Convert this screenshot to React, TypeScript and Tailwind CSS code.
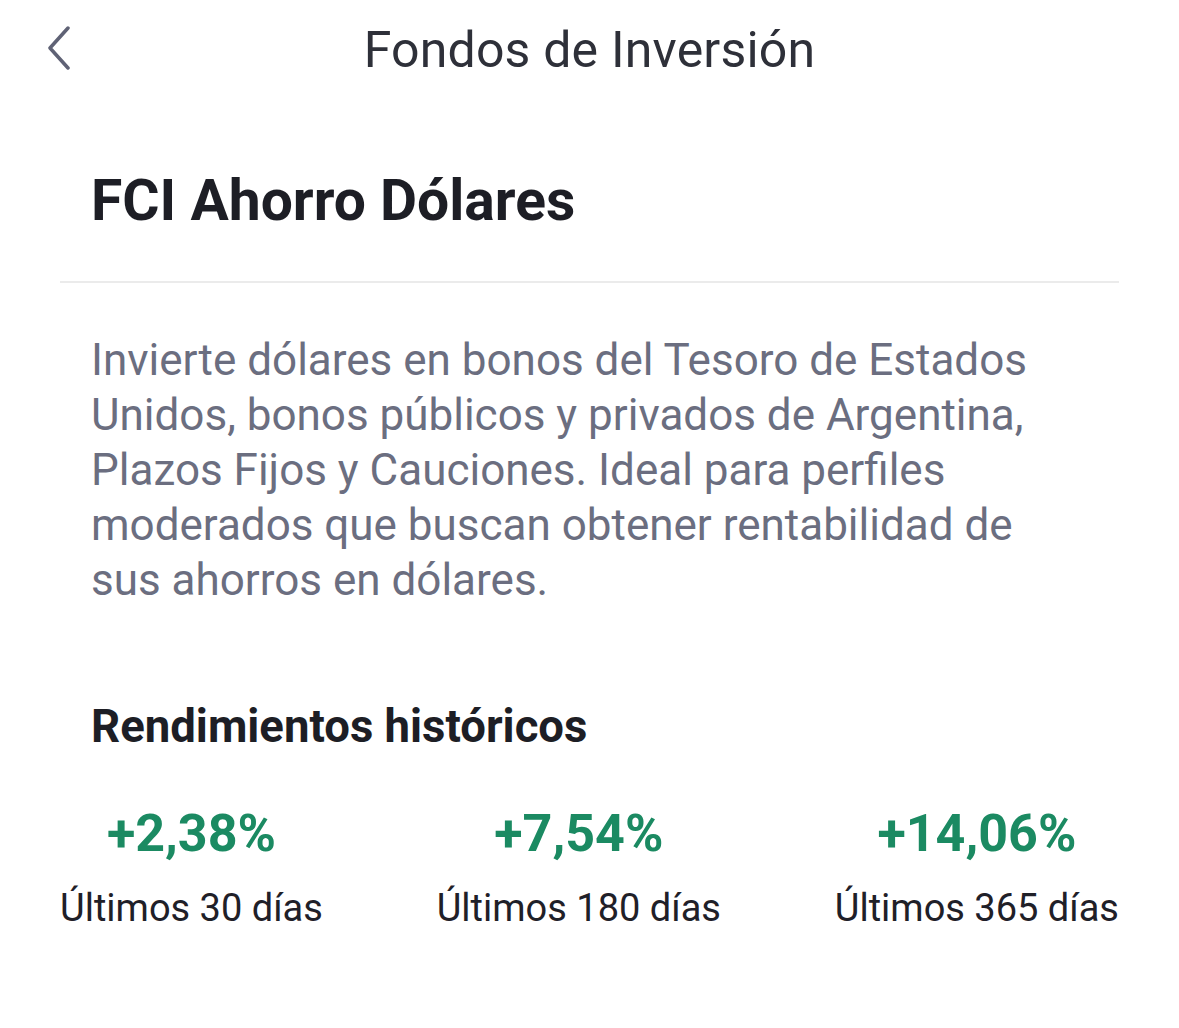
const returns = [
  { value: "+2,38%", label: "Últimos 30 días" },
  { value: "+7,54%", label: "Últimos 180 días" },
  { value: "+14,06%", label: "Últimos 365 días" },
];

export default function App() {
  return (
    <div
      className="w-[1179px] h-[1028px] bg-white text-[#1f2028]"
      style={{ fontFamily: "Roboto, 'Noto Sans', sans-serif" }}
    >
      {/* Header */}
      <div className="relative flex items-center justify-center h-[100px]">
        <button className="absolute left-[37px] top-[18px] p-1" aria-label="Volver">
          <svg width="32" height="48" viewBox="0 0 32 48" fill="none">
            <path d="M27 6 L9 26 L27 46" stroke="#5f6275" strokeWidth="3.5" strokeLinecap="round" strokeLinejoin="round" />
          </svg>
        </button>
        <h1 className="text-[50px] font-normal text-[#2e3039] tracking-[0.2px]">Fondos de Inversión</h1>
      </div>

      {/* Fund title */}
      <div className="px-[60px]">
        <h2 className="pl-[31px] pt-[72px] pb-[52px] text-[57px] leading-none font-bold text-[#1d1e25]">
          FCI Ahorro Dólares
        </h2>
        <div className="h-[2px] bg-[#ebebeb]" />
      </div>

      {/* Description */}
      <p className="pl-[91px] pr-[130px] pt-[50px] text-[44px] leading-[55px] text-[#6b6e80]">
        Invierte dólares en bonos del Tesoro de Estados Unidos, bonos públicos y privados de Argentina,
        Plazos Fijos y Cauciones. Ideal para perfiles moderados que buscan obtener rentabilidad de sus
        ahorros en dólares.
      </p>

      {/* Historic returns */}
      <h3 className="px-[91px] pt-[96px] text-[45.5px] leading-none font-bold text-[#1d1e25]">
        Rendimientos históricos
      </h3>
      <div className="flex justify-between px-[60px] pt-[58px]">
        {returns.map((r) => (
          <div key={r.label} className="flex flex-col items-center">
            <span className="text-[52px] leading-none font-bold text-[#1b8a62]">{r.value}</span>
            <span className="pt-[29px] text-[38px] leading-none text-[#1f2028]">{r.label}</span>
          </div>
        ))}
      </div>
    </div>
  );
}
